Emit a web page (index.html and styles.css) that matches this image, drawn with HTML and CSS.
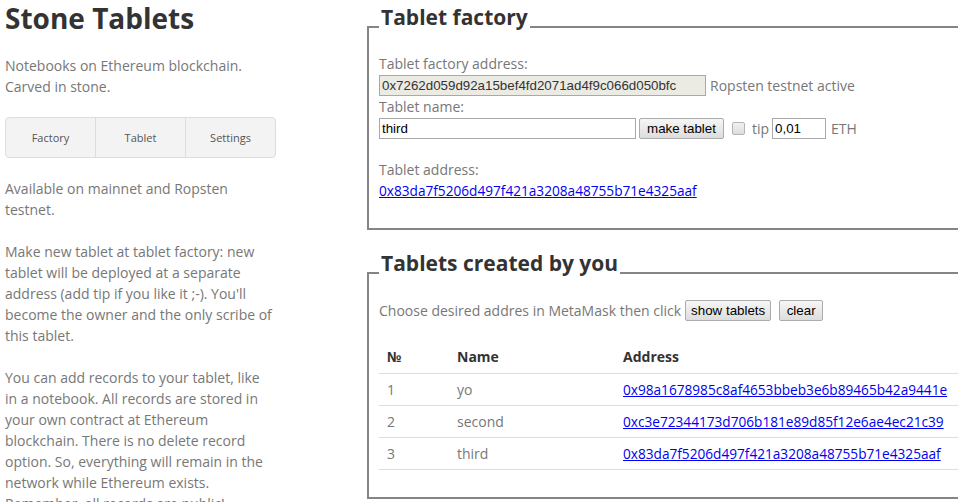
FILE: index.html
```html
<!DOCTYPE html>
<html lang="en">
<head>
<meta charset="utf-8">
<title>Stone Tablets</title>
<link rel="stylesheet" href="styles.css">
</head>
<body>
<div class="page">
  <aside class="side">
    <h1 class="title">Stone Tablets</h1>
    <p class="text text-intro">Notebooks on Ethereum blockchain.<br>Carved in stone.</p>
    <nav class="tabs">
      <a class="tab" href="#">Factory</a>
      <a class="tab" href="#">Tablet</a>
      <a class="tab" href="#">Settings</a>
    </nav>
    <p class="text">Available on mainnet and Ropsten<br>testnet.</p>
    <p class="text">Make new tablet at tablet factory: new<br>tablet will be deployed at a separate<br>address (add tip if you like it ;-). You'll<br>become the owner and the only scribe of<br>this tablet.</p>
    <p class="text">You can add records to your tablet, like<br>in a notebook. All records are stored in<br>your own contract at Ethereum<br>blockchain. There is no delete record<br>option. So, everything will remain in the<br>network while Ethereum exists.<br>Remember, all records are public!</p>
  </aside>
  <main class="main">
    <fieldset class="box box-factory">
      <legend class="legend">Tablet factory</legend>
      <div class="label">Tablet factory address:</div>
      <div class="row">
        <input class="field field-addr" type="text" readonly value="0x7262d059d92a15bef4fd2071ad4f9c066d050bfc">
        <span class="note note-net">Ropsten testnet active</span>
      </div>
      <div class="label">Tablet name:</div>
      <div class="row">
        <input class="field field-name" type="text" value="third">
        <button class="btn btn-make" type="button">make tablet</button>
        <input class="check" type="checkbox">
        <span class="note note-tip">tip</span>
        <input class="field field-tip" type="text" value="0,01">
        <span class="note note-eth">ETH</span>
      </div>
      <div class="label label-gap">Tablet address:</div>
      <div class="label"><a class="link" href="#">0x83da7f5206d497f421a3208a48755b71e4325aaf</a></div>
    </fieldset>

    <fieldset class="box box-list">
      <legend class="legend">Tablets created by you</legend>
      <div class="row">
        <span class="note">Choose desired addres in MetaMask then click</span>
        <button class="btn btn-show" type="button">show tablets</button>
        <button class="btn btn-clear" type="button">clear</button>
      </div>
      <table class="tbl">
        <thead>
          <tr><th class="c-num">№</th><th class="c-name">Name</th><th>Address</th></tr>
        </thead>
        <tbody>
          <tr><td>1</td><td>yo</td><td><a class="link" href="#">0x98a1678985c8af4653bbeb3e6b89465b42a9441e</a></td></tr>
          <tr><td>2</td><td>second</td><td><a class="link" href="#">0xc3e72344173d706b181e89d85f12e6ae4ec21c39</a></td></tr>
          <tr><td>3</td><td>third</td><td><a class="link" href="#">0x83da7f5206d497f421a3208a48755b71e4325aaf</a></td></tr>
        </tbody>
      </table>
    </fieldset>
  </main>
</div>
</body>
</html>
```

FILE: styles.css
```css
html, body {
  margin: 0;
  padding: 0;
  overflow: hidden;
  background: #fff;
}
body {
  font-family: "Open Sans", "Noto Sans", sans-serif;
  font-size: 14px;
  line-height: 21px;
  color: #777;
}
.page {
  display: flex;
  align-items: flex-start;
  padding-left: 5px;
  width: 1100px;
}
.side {
  width: 273px;
  flex-shrink: 0;
}
.title {
  margin: 1px 0 20px;
  font-size: 28px;
  line-height: 34px;
  font-weight: 700;
  color: #333;
}
.text {
  margin: 0 0 21px;
  white-space: nowrap;
}
.text-intro {
  margin-bottom: 20px;
}
.tabs {
  display: flex;
  height: 39px;
  width: 269px;
  border: 1px solid #ddd;
  border-radius: 4px;
  background: #f3f3f3;
  margin: 0 0 20px;
}
.tab {
  flex: 1;
  display: flex;
  align-items: center;
  justify-content: center;
  font-size: 11px;
  color: #555;
  text-decoration: none;
}
.tab + .tab {
  border-left: 1px solid #ddd;
}
.main {
  margin-left: 89px;
  width: 620px;
  flex-shrink: 0;
  padding-top: 3px;
}
.box {
  margin: 0;
  padding: 2px 10px 27px;
  border: 2px solid #858585;
  min-width: 0;
}
.box-list {
  margin-top: 19px;
}
.legend {
  padding: 0 2px 20px;
  font-size: 21px;
  line-height: 28px;
  font-weight: 700;
  color: #333;
}
.label {
  height: 21px;
}
.label-gap {
  margin-top: 20px;
}
.row {
  display: flex;
  align-items: center;
  height: 22px;
  white-space: nowrap;
}
.field {
  box-sizing: border-box;
  height: 21px;
  padding: 1px 2px;
  border: 1px solid #a9a9a9;
  font-family: "Liberation Sans", Arial, sans-serif;
  font-size: 13.33px;
  color: #000;
  background: #fff;
  outline: none;
}
.field-addr {
  width: 327px;
  background: #ebebe4;
  color: #333;
}
.field-name {
  width: 257px;
}
.field-tip {
  width: 54px;
  margin-left: 3px;
}
.note-net {
  margin-left: 4px;
}
.btn {
  box-sizing: border-box;
  height: 21px;
  padding: 0;
  border: 1px solid #acacac;
  border-radius: 2px;
  background: linear-gradient(#f6f6f6, #dddddd);
  font-family: "Liberation Sans", Arial, sans-serif;
  font-size: 13.33px;
  color: #000;
  white-space: nowrap;
}
.btn-make {
  margin-left: 3px;
  width: 85px;
}
.btn-show {
  margin-left: 4px;
  width: 86px;
}
.btn-clear {
  margin-left: 8px;
  width: 44px;
}
.check {
  -webkit-appearance: none;
  appearance: none;
  box-sizing: border-box;
  width: 13px;
  height: 13px;
  margin: 0 0 0 8px;
  border: 1px solid #b4b4b4;
  border-radius: 2px;
  background: linear-gradient(#f2f2f2, #dcdcdc);
}
.note-tip {
  margin-left: 7px;
}
.note-eth {
  margin-left: 5px;
}
.link {
  color: #0000ee;
  text-decoration: underline;
  font-size: 13.65px;
}
.tbl {
  width: 100%;
  margin-top: 20px;
  border-collapse: collapse;
  border-bottom: 1px solid #ddd;
}
.tbl th {
  text-align: left;
  font-weight: 700;
  color: #333;
  padding: 5px 8px 6px;
  line-height: 21px;
}
.tbl td {
  padding: 5px 8px;
  line-height: 21px;
  border-top: 1px solid #ddd;
}
.c-num {
  width: 54px;
}
.c-name {
  width: 150px;
}
```
